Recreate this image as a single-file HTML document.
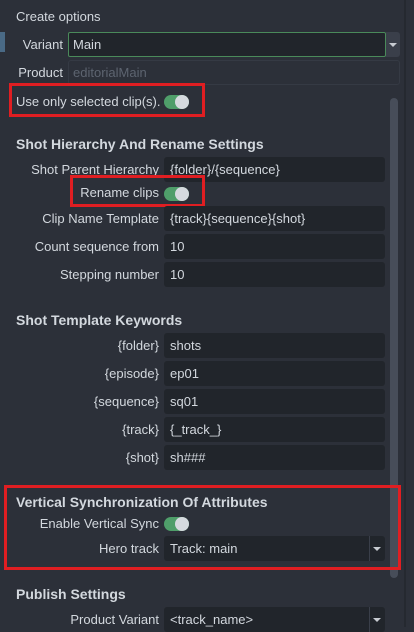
<!DOCTYPE html><html><head><style>
body{margin:0;width:414px;height:627px;background:#2c3039;font-family:"Liberation Sans",sans-serif;font-size:13px;color:#d3d8de;position:relative;overflow:hidden}
.a{position:absolute;white-space:nowrap}
.l{position:absolute;text-align:right;white-space:nowrap;line-height:25px}
.in{position:absolute;left:164px;width:221px;height:25px;background:#21252b;border-radius:3px;line-height:25px;box-sizing:border-box;padding-left:6px}
.h{position:absolute;left:16px;font-weight:bold;font-size:14px}
.t{position:absolute;width:25px;height:14px;border-radius:7px;background:#4f9e6a}
.t:after{content:"";position:absolute;right:0;top:0;width:14px;height:14px;border-radius:7px;background:#d5d9de}
.r{position:absolute;border:3px solid #e01e22;box-sizing:border-box}
.ar{position:absolute;width:0;height:0;border-left:4px solid transparent;border-right:4px solid transparent;border-top:4px solid #c8ccd2}
</style></head><body>
<div style="position:absolute;left:404px;top:0;width:2px;height:627px;background:#252930"></div>
<div style="position:absolute;left:0;top:32px;width:5px;height:20px;background:#4a6a86"></div>
<div class="a" style="left:16px;top:9px">Create options</div>
<div class="l" style="left:0;width:63px;top:32px">Variant</div>
<div style="position:absolute;left:68px;top:32px;width:318px;height:25px;background:#21252b;border:1px solid #4a8a5a;box-sizing:border-box;border-radius:2px;line-height:23px;padding-left:4px">Main</div>
<div style="position:absolute;left:386px;top:32px;width:14px;height:25px;background:#3a3f4a;border-radius:0 3px 3px 0"></div><div class="ar" style="left:389px;top:43px"></div>
<div class="l" style="left:0;width:63px;top:60px">Product</div>
<div style="position:absolute;left:68px;top:60px;width:332px;height:25px;border:1px solid #353a44;box-sizing:border-box;border-radius:3px;line-height:23px;padding-left:4px;color:#5d6470">editorialMain</div>
<div style="position:absolute;left:390px;top:98px;width:8px;height:480px;background:#474d59;border-radius:4px"></div>
<div class="r" style="left:9px;top:83px;width:196px;height:34px"></div>
<div class="a" style="left:16px;top:94px">Use only selected clip(s).</div><div class="t" style="left:164px;top:95px"></div>
<div class="h" style="top:136px">Shot Hierarchy And Rename Settings</div>
<div class="l" style="left:0;width:159px;top:157px">Shot Parent Hierarchy</div><div class="in" style="top:157px">{folder}/{sequence}</div>
<div class="r" style="left:70px;top:175px;width:135px;height:32px"></div>
<div class="l" style="left:0;width:159px;top:180px">Rename clips</div><div class="t" style="left:164px;top:187px"></div>
<div class="l" style="left:0;width:159px;top:206px">Clip Name Template</div><div class="in" style="top:206px">{track}{sequence}{shot}</div>
<div class="l" style="left:0;width:159px;top:234px">Count sequence from</div><div class="in" style="top:234px">10</div>
<div class="l" style="left:0;width:159px;top:262px">Stepping number</div><div class="in" style="top:262px">10</div>
<div class="h" style="top:312px">Shot Template Keywords</div>
<div class="l" style="left:0;width:159px;top:333px">{folder}</div><div class="in" style="top:333px">shots</div>
<div class="l" style="left:0;width:159px;top:361px">{episode}</div><div class="in" style="top:361px">ep01</div>
<div class="l" style="left:0;width:159px;top:389px">{sequence}</div><div class="in" style="top:389px">sq01</div>
<div class="l" style="left:0;width:159px;top:417px">{track}</div><div class="in" style="top:417px">{_track_}</div>
<div class="l" style="left:0;width:159px;top:445px">{shot}</div><div class="in" style="top:445px">sh###</div>
<div class="r" style="left:4px;top:485px;width:397px;height:85px"></div>
<div class="h" style="top:494px">Vertical Synchronization Of Attributes</div>
<div class="l" style="left:0;width:159px;top:511px">Enable Vertical Sync</div><div class="t" style="left:164px;top:517px"></div>
<div class="l" style="left:0;width:159px;top:536px">Hero track</div><div class="in" style="top:536px">Track: main</div>
<div style="position:absolute;left:369px;top:536px;width:1px;height:25px;background:#3a3f4a"></div><div class="ar" style="left:373px;top:547px"></div>
<div class="h" style="top:586px">Publish Settings</div>
<div class="l" style="left:0;width:159px;top:607px">Product Variant</div><div class="in" style="top:607px">&lt;track_name&gt;</div>
<div style="position:absolute;left:369px;top:607px;width:1px;height:25px;background:#3a3f4a"></div><div class="ar" style="left:373px;top:618px"></div>
</body></html>
